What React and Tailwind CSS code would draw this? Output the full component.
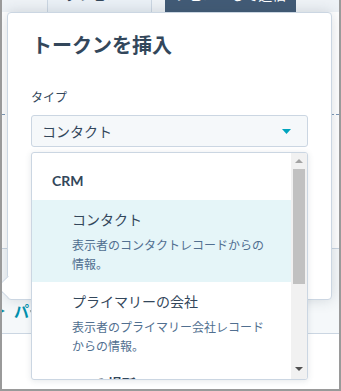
import React from "react";

const font = { fontFamily: "Lato, 'Noto Sans CJK JP', sans-serif" };

function Item({ title, desc, active }) {
  return (
    <div className={`pl-[40px] pr-[12px] pt-[10px] pb-[8px] ${active ? "bg-[#e5f5f8]" : "bg-white"}`}>
      <div className="text-[14px] leading-[20px] text-[#33475b]">{title}</div>
      <div className="mt-[6px] text-[12px] leading-[19px] text-[#516f90] w-[200px]">{desc}</div>
    </div>
  );
}

export default function App() {
  return (
    <div
      className="relative w-[341px] h-[391px] overflow-hidden border-x-2 border-b-2 border-[#9a9a9a] bg-white"
      style={font}
    >
      {/* background page */}
      <div className="h-[12px] bg-[#eef2f6] flex pl-[45px] gap-[13px]">
        <div className="w-[105px] h-[12px] overflow-hidden bg-[#eaf0f6] border-x border-[#cbd6e2] flex justify-center">
          <div className="mt-[-12px] text-[14px] leading-[14px] text-[#33475b]">プレビュー</div>
        </div>
        <div className="w-[131px] h-[12px] overflow-hidden bg-[#425b76] flex justify-center">
          <div className="mt-[-12px] text-[14px] leading-[14px] text-white">レビューして送信</div>
        </div>
      </div>
      <div className="h-[102px]" />
      <div className="border-t border-dashed border-[#7c98b6]" />
      <div className="h-[133px]" />
      <div className="border-t border-[#cbd6e2]" />
      <div className="h-[84px] bg-[#f5f8fa] flex items-center pl-[12px] pt-[52px] pb-[12px]">
        <svg width="10" height="12" viewBox="0 0 10 12" className="ml-[-17px] mr-[7px] shrink-0">
          <path d="M2 3 L8 6 L2 9 Z" fill="#0091ae" />
        </svg>
        <span className="text-[15px] font-bold text-[#0091ae] leading-[20px] whitespace-nowrap">パーソナライズ</span>
      </div>
      <div className="border-t border-[#cbd6e2]" />

      {/* popover card */}
      <div className="absolute left-[5px] top-[12px] w-[325px] h-[288px] bg-white border border-[#cbd6e2] rounded-[4px] shadow-[0_0_14px_rgba(45,62,80,0.18)] px-[23px] pt-[18px]">
        <div className="absolute left-[-8px] top-[266px] w-[16px] h-[16px] rotate-45 bg-white border-l border-b border-[#cbd6e2]" />
        <h1 className="text-[20px] leading-[28px] font-bold text-[#33475b] ml-[1px]">トークンを挿入</h1>
        <div className="mt-[31px] text-[12px] leading-[16px] text-[#33475b]">タイプ</div>
        <div className="relative mt-[9px]">
          <div className="h-[32px] bg-[#f5f8fa] border border-[#cbd6e2] rounded-[3px] flex items-center justify-between pl-[10px] pr-[16px]">
            <span className="text-[14px] text-[#33475b]">コンタクト</span>
            <svg width="9" height="5" viewBox="0 0 9 5">
              <path d="M0 0 H9 L4.5 5 Z" fill="#00a4bd" />
            </svg>
          </div>
          {/* dropdown */}
          <div className="absolute left-0 right-0 top-[37px] h-[228px] bg-white border border-[#cbd6e2] rounded-[3px] overflow-hidden shadow-[0_1px_6px_rgba(45,62,80,0.12)] flex">
            <div className="flex-1 overflow-hidden">
              <div className="pl-[20px] pt-[18px] pb-[9px] text-[14px] leading-[20px] font-bold text-[#33475b]">CRM</div>
              <Item title="コンタクト" desc="表示者のコンタクトレコードからの情報。" active />
              <Item title="プライマリーの会社" desc="表示者のプライマリー会社レコードからの情報。" />
              <div className="pl-[20px] pt-[10px] text-[14px] leading-[20px] font-bold text-[#33475b]">Office の場所</div>
            </div>
            <div className="w-[16px] bg-[#f1f1f1] flex flex-col items-center">
              <div className="h-[16px] flex items-center justify-center">
                <svg width="8" height="4" viewBox="0 0 8 4">
                  <path d="M0 4 H8 L4 0 Z" fill="#a3a3a3" />
                </svg>
              </div>
              <div className="w-[12px] h-[115px] bg-[#c1c1c1]" />
              <div className="flex-1" />
              <div className="h-[16px] flex items-center justify-center mb-[2px]">
                <svg width="8" height="4" viewBox="0 0 8 4">
                  <path d="M0 0 H8 L4 4 Z" fill="#505050" />
                </svg>
              </div>
            </div>
          </div>
        </div>
      </div>
    </div>
  );
}
